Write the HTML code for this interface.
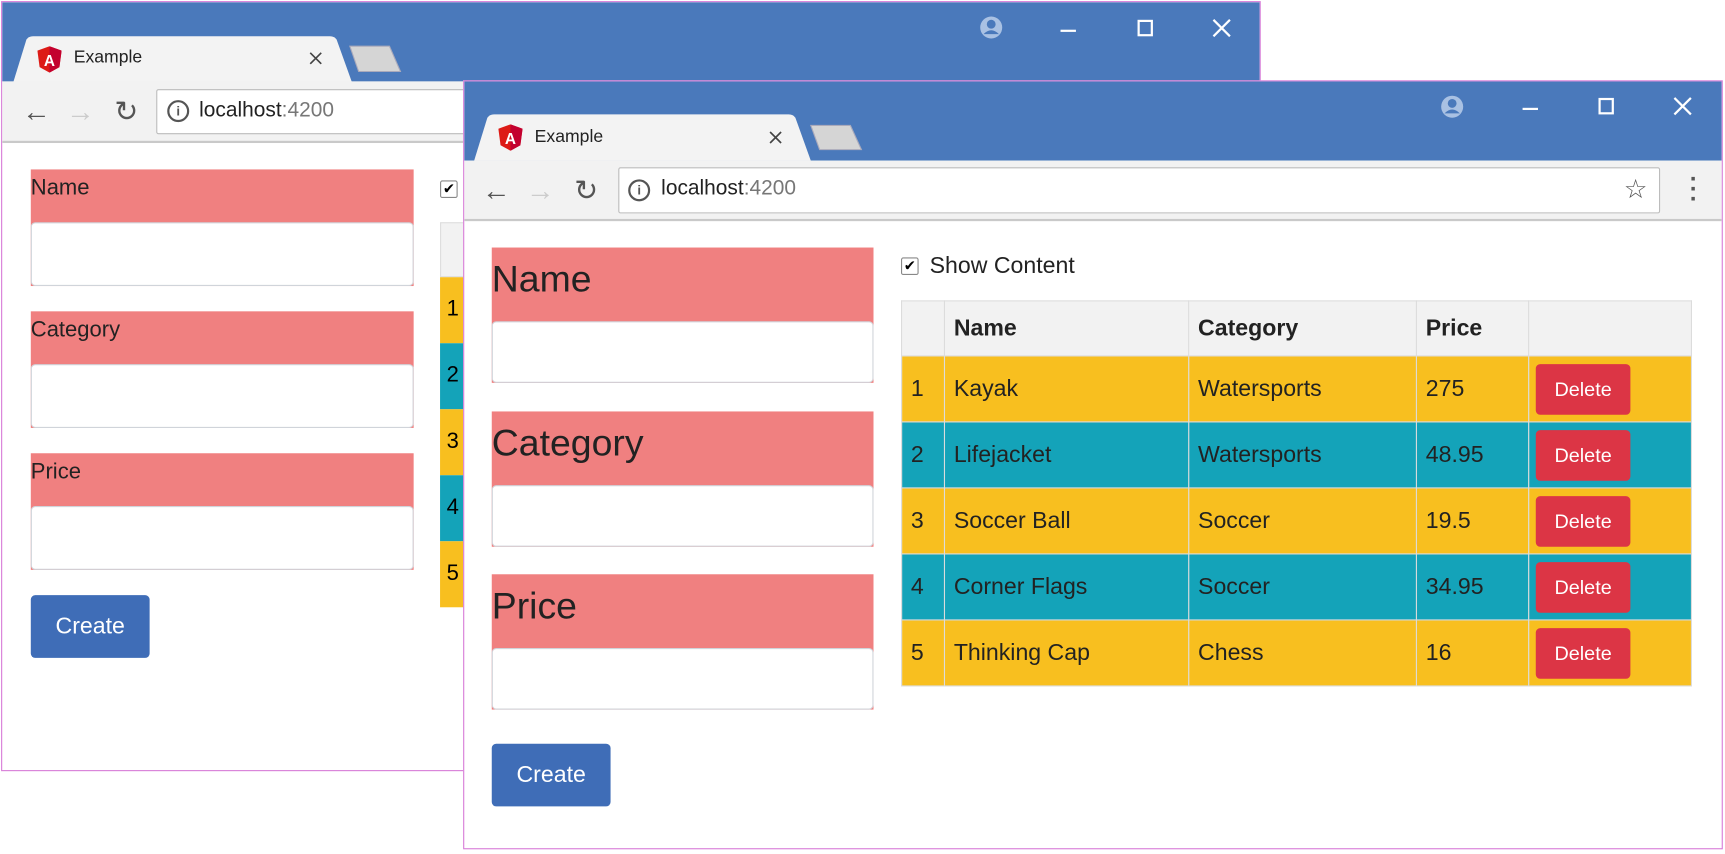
<!DOCTYPE html>
<html><head><meta charset="utf-8">
<style>
*{box-sizing:border-box;margin:0;padding:0}
html,body{width:1725px;height:853px;overflow:hidden;background:#fff;font-family:"Liberation Sans",sans-serif}
#s{position:absolute;left:0;top:0;width:1568px;height:776px;transform:scale(1.10013);transform-origin:0 0}
.a{position:absolute}
.win{position:absolute;border:1px solid #d77ad7;background:#fff;overflow:hidden}
.title{position:absolute;left:0;right:0;top:0;background:#4a79bb}
.tool{position:absolute;left:0;right:0;background:#f2f2f2;border-bottom:2px solid #c9c9c9}
.addr{position:absolute;background:#fff;border:1px solid #bcbcbc;border-radius:2px;font-size:19px;color:#222;padding-left:38px;line-height:38px}
.addr span{color:#777}
.lbl{position:absolute;background:#f08080;color:#222}
.inp{position:absolute;background:#fff;border:1px solid #d0d4da;border-radius:4px}
.btn{position:absolute;background:#3f6db7;color:#fff;border-radius:4px;text-align:center;font-size:21px}
td{border:1px solid #dcdcdc;font-size:21px;color:#222;padding-left:8px;height:60px}
.y td{background:#f8bf1f}
.t td{background:#14a3b9}
.del{display:inline-block;background:#dc3545;color:#fff;border-radius:4px;font-size:18px;width:86px;height:46px;line-height:46px;text-align:center}
</style></head><body><div id="s">

<!-- back window -->
<div class="win" style="left:1px;top:1px;width:1145px;height:700px">
 <div class="title" style="height:72px"></div>
 <svg class="a" style="left:0;top:30px" width="380" height="44"><path d="M10 43 L22 4 Q24 1 28 1 L298 1 Q302 1 304 4 L318 43 Z" fill="#f3f3f3"/><path d="M316 10 L352 10 L362 33 L324 33 Z" fill="#d5d5d5" stroke="#aab" /></svg>
 <svg class="a" style="left:32px;top:40px" width="22" height="24"><path d="M11 0 L22 4 L20 19 L11 24 L2 19 L0 4Z" fill="#dd1b16"/><path d="M11 0 L22 4 L20 19 L11 24Z" fill="#c3002f"/><text x="11" y="18" font-size="14" fill="#fff" text-anchor="middle" font-family="Liberation Sans" font-weight="bold">A</text></svg>
 <div class="a" style="left:65px;top:42px;font-size:16px;color:#222">Example</div>
 <svg class="a" style="left:279px;top:45px" width="12" height="12"><path d="M1 1L11 11M11 1L1 11" stroke="#444" stroke-width="1.5"/></svg>
 <svg class="a" style="left:888px;top:12px" width="22" height="22"><circle cx="11" cy="11" r="10" fill="#a9c1e3"/><circle cx="11" cy="8" r="4" fill="#4a79bb"/><path d="M4 17 Q11 10 18 17" fill="#4a79bb"/></svg>
 <div class="a" style="left:962px;top:25px;width:14px;height:2px;background:#fff"></div>
 <div class="a" style="left:1032px;top:16px;width:14px;height:15px;border:2px solid #fff"></div>
 <svg class="a" style="left:1100px;top:15px" width="17" height="17"><path d="M1 1L16 16M16 1L1 16" stroke="#fff" stroke-width="2"/></svg>
 <div class="tool" style="top:72px;height:56px"></div>
 <div class="a" style="left:18px;top:84px;font-size:26px;color:#555">←</div>
 <div class="a" style="left:58px;top:84px;font-size:26px;color:#ccc">→</div>
 <div class="a" style="left:102px;top:84px;font-size:26px;color:#555">↻</div>
 <div class="addr" style="left:140px;top:79px;width:1010px;height:41px">localhost<span>:4200</span></div>
 <div class="a" style="left:150px;top:89px;width:20px;height:20px;border:2px solid #555;border-radius:50%;font-size:12px;text-align:center;line-height:16px;font-weight:bold;color:#555">i</div>
 <div class="lbl" style="left:26px;top:152px;width:348px;height:106px;font-size:20px;padding-top:6px">Name</div>
 <div class="inp" style="left:26px;top:200px;width:348px;height:58px"></div>
 <div class="lbl" style="left:26px;top:281px;width:348px;height:106px;font-size:20px;padding-top:6px">Category</div>
 <div class="inp" style="left:26px;top:329px;width:348px;height:58px"></div>
 <div class="lbl" style="left:26px;top:410px;width:348px;height:106px;font-size:20px;padding-top:6px">Price</div>
 <div class="inp" style="left:26px;top:458px;width:348px;height:58px"></div>
 <div class="btn" style="left:26px;top:539px;width:108px;height:57px;line-height:57px">Create</div>
 <div class="a" style="left:398px;top:162px;width:16px;height:16px;border:1px solid #888;border-radius:2px;font-size:13px;line-height:14px;text-align:center">✔</div>
 <div class="a" style="left:398px;top:200px;width:30px;height:50px;background:#f2f2f2;border:1px solid #ddd"></div>
 <div class="a" style="left:398px;top:250px;width:30px;height:60px;background:#f8bf1f;font-size:20px;padding:18px 0 0 6px">1</div>
 <div class="a" style="left:398px;top:310px;width:30px;height:60px;background:#14a3b9;font-size:20px;padding:18px 0 0 6px">2</div>
 <div class="a" style="left:398px;top:370px;width:30px;height:60px;background:#f8bf1f;font-size:20px;padding:18px 0 0 6px">3</div>
 <div class="a" style="left:398px;top:430px;width:30px;height:60px;background:#14a3b9;font-size:20px;padding:18px 0 0 6px">4</div>
 <div class="a" style="left:398px;top:490px;width:30px;height:60px;background:#f8bf1f;font-size:20px;padding:18px 0 0 6px">5</div>
</div>

<!-- front window -->
<div class="win" style="left:421px;top:73px;width:1145px;height:699px">
 <div class="title" style="height:72px"></div>
 <svg class="a" style="left:0;top:28px" width="380" height="44"><path d="M9 44 L21 5 Q23 2 27 2 L295 2 Q299 2 301 5 L315 44 Z" fill="#f3f3f3"/><path d="M315 12 L351 12 L361 34 L323 34 Z" fill="#d5d5d5" stroke="#aab"/></svg>
 <svg class="a" style="left:31px;top:39px" width="22" height="24"><path d="M11 0 L22 4 L20 19 L11 24 L2 19 L0 4Z" fill="#dd1b16"/><path d="M11 0 L22 4 L20 19 L11 24Z" fill="#c3002f"/><text x="11" y="18" font-size="14" fill="#fff" text-anchor="middle" font-family="Liberation Sans" font-weight="bold">A</text></svg>
 <div class="a" style="left:64px;top:42px;font-size:16px;color:#222">Example</div>
 <svg class="a" style="left:277px;top:45px" width="12" height="12"><path d="M1 1L11 11M11 1L1 11" stroke="#444" stroke-width="1.5"/></svg>
 <svg class="a" style="left:887px;top:12px" width="22" height="22"><circle cx="11" cy="11" r="10" fill="#a9c1e3"/><circle cx="11" cy="8" r="4" fill="#4a79bb"/><path d="M4 17 Q11 10 18 17" fill="#4a79bb"/></svg>
 <div class="a" style="left:962px;top:24px;width:14px;height:2px;background:#fff"></div>
 <div class="a" style="left:1031px;top:15px;width:14px;height:15px;border:2px solid #fff"></div>
 <svg class="a" style="left:1099px;top:14px" width="17" height="17"><path d="M1 1L16 16M16 1L1 16" stroke="#fff" stroke-width="2"/></svg>
 <div class="tool" style="top:72px;height:55px"></div>
 <div class="a" style="left:16px;top:84px;font-size:26px;color:#555">←</div>
 <div class="a" style="left:56px;top:84px;font-size:26px;color:#ccc">→</div>
 <div class="a" style="left:100px;top:84px;font-size:26px;color:#555">↻</div>
 <div class="addr" style="left:140px;top:78px;width:947px;height:42px">localhost<span>:4200</span></div>
 <div class="a" style="left:149px;top:89px;width:20px;height:20px;border:2px solid #555;border-radius:50%;font-size:12px;text-align:center;line-height:16px;font-weight:bold;color:#555">i</div>
 <div class="a" style="left:1054px;top:84px;font-size:24px;color:#555">☆</div>
 <div class="a" style="left:1114px;top:84px;font-size:22px;color:#555;font-weight:bold;line-height:9px">·<br>·<br>·</div>
 <div class="lbl" style="left:25px;top:151px;width:347px;height:123px;font-size:34px;padding-top:10px">Name</div>
 <div class="inp" style="left:25px;top:218px;width:347px;height:56px"></div>
 <div class="lbl" style="left:25px;top:300px;width:347px;height:123px;font-size:34px;padding-top:10px">Category</div>
 <div class="inp" style="left:25px;top:367px;width:347px;height:56px"></div>
 <div class="lbl" style="left:25px;top:448px;width:347px;height:123px;font-size:34px;padding-top:10px">Price</div>
 <div class="inp" style="left:25px;top:515px;width:347px;height:56px"></div>
 <div class="btn" style="left:25px;top:602px;width:108px;height:57px;line-height:57px">Create</div>
 <div class="a" style="left:397px;top:160px;width:16px;height:16px;border:1px solid #888;border-radius:2px;font-size:13px;line-height:14px;text-align:center">✔</div>
 <div class="a" style="left:423px;top:156px;font-size:21px;color:#222">Show Content</div>
 <table class="a" style="left:397px;top:199px;width:719px;border-collapse:collapse">
  <tr style="background:#f2f2f2"><td style="width:39px;height:50px"></td><td style="width:222px;height:50px;font-weight:bold">Name</td><td style="width:207px;height:50px;font-weight:bold">Category</td><td style="width:102px;height:50px;font-weight:bold">Price</td><td style="height:50px"></td></tr>
  <tr class="y"><td>1</td><td>Kayak</td><td>Watersports</td><td>275</td><td style="padding-left:6px"><span class="del">Delete</span></td></tr>
  <tr class="t"><td>2</td><td>Lifejacket</td><td>Watersports</td><td>48.95</td><td style="padding-left:6px"><span class="del">Delete</span></td></tr>
  <tr class="y"><td>3</td><td>Soccer Ball</td><td>Soccer</td><td>19.5</td><td style="padding-left:6px"><span class="del">Delete</span></td></tr>
  <tr class="t"><td>4</td><td>Corner Flags</td><td>Soccer</td><td>34.95</td><td style="padding-left:6px"><span class="del">Delete</span></td></tr>
  <tr class="y"><td>5</td><td>Thinking Cap</td><td>Chess</td><td>16</td><td style="padding-left:6px"><span class="del">Delete</span></td></tr>
 </table>
</div>
</div></body></html>
